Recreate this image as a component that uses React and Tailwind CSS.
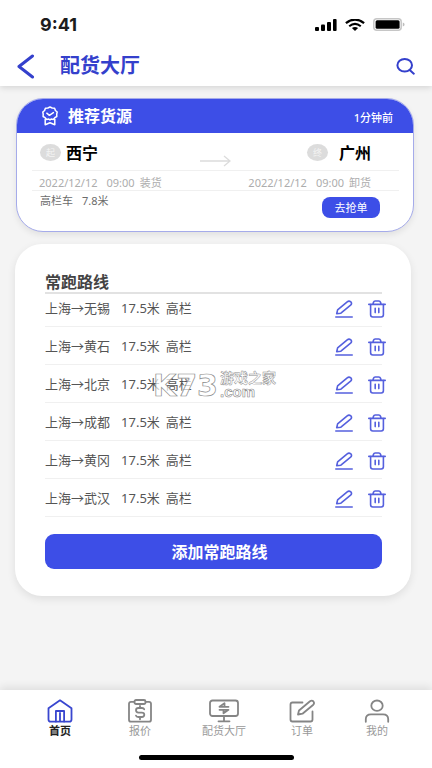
import React from "react";

const routes = ["无锡", "黄石", "北京", "成都", "黄冈", "武汉"];

function StatusBar() {
  return (
    <div className="flex h-[46px] items-center justify-between pt-[3px] pr-[27px] pl-10">
      <span className="font-['Inter',sans-serif] text-[18px] leading-5 font-bold text-[#1c1c1c]">9:41</span>
      <div className="flex items-center gap-2">
        <svg width="22" height="12" viewBox="0 0 22 12" fill="#000" aria-hidden="true">
          <rect x="0" y="8" width="4" height="4" rx="1" />
          <rect x="6" y="5.5" width="4" height="6.5" rx="1" />
          <rect x="12" y="3" width="4" height="9" rx="1" />
          <rect x="18" y="0" width="3.6" height="12" rx="1" />
        </svg>
        <svg width="20" height="12" viewBox="0 0 20 12" fill="none" aria-hidden="true">
          <path d="M.9 4.2Q10-3 19.1 4.2" stroke="#000" strokeWidth="2.3" />
          <path d="M4.2 7.2Q10 2.6 15.8 7.2" stroke="#000" strokeWidth="2.1" />
          <path d="M6.9 9.1Q10 6.7 13.1 9.1L10 12Z" fill="#000" />
        </svg>
        <svg width="32" height="13" viewBox="0 0 32 13" fill="none" aria-hidden="true">
          <rect x=".8" y=".8" width="27.400" height="11.4" rx="3" stroke="#c6c6c6" strokeWidth="1.5" />
          <rect x="2.6" y="2.2" width="24" height="8.6" rx="1.5" fill="#000" />
          <path d="M29.8 4.4v4.200q1.800-.6 1.800-2.100t-1.800-2.100Z" fill="#bdbdbd" />
        </svg>
      </div>
    </div>
  );
}

function MedalIcon() {
  return (
    <svg width="18" height="20" viewBox="0 0 18 20" fill="none" stroke="#fff" strokeWidth="1.5" strokeLinejoin="round" strokeLinecap="round" aria-hidden="true">
      <path d="M9 1l2.2 1 2.4.3.8 2.2L16.2 6l-.5 2.2.1 2.3-2 1.2-1.6 1.7-2.1-.3L9 14l-1.2-.9-2.1.3-1.6-1.7-2-1.2.1-2.3L1.800 6l1.800-1.500.8-2.200L6.800 2Z" />
      <path d="M5.800 7.200L8.400 9.300l4-2.700" />
      <path d="M4.200 13.300v5.500L9 16.800l4.800 2v-5.500" />
    </svg>
  );
}

function PencilIcon() {
  return (
    <svg width="18" height="18" viewBox="0 0 18 18" fill="none" stroke="#5560de" strokeWidth="1.600" strokeLinecap="round" strokeLinejoin="round" aria-hidden="true">
      <path d="M1.700 13.700L2.600 9.900 12.200 1.800Q14 .4 15.800 1.800 17.300 3.600 15.600 5.200L5.900 13.200Z" />
      <path d="M.8 17H17.200" />
    </svg>
  );
}

function TrashIcon() {
  return (
    <svg width="18" height="18" viewBox="0 0 18 18" fill="none" stroke="#5560de" strokeWidth="1.600" strokeLinecap="round" strokeLinejoin="round" aria-hidden="true">
      <path d="M.8 4.400H17.200M4.900 4.200L5.500 2.200Q5.900 1 7.200 1H10.800Q12.100 1 12.500 2.200L13.100 4.200" />
      <path d="M2.600 4.600V14.800Q2.600 17 4.800 17H13.200Q15.400 17 15.400 14.800V4.600M7.200 8.200V12.600M10.800 8.200V12.600" />
    </svg>
  );
}

function Badge({ children }) {
  return (
    <span className="flex h-[17px] w-[21px] items-center justify-center rounded-[50%] bg-[#dcdcdc] text-[9px] leading-none text-[#f4f4f4]">
      {children}
    </span>
  );
}

function Schedule({ action }) {
  return (
    <span className="flex items-center">
      <span className="mr-[9px]">2022/12/12</span>
      <span className="mr-[5px]">09:00</span>
      <span>{action}</span>
    </span>
  );
}

function RecommendedCard() {
  return (
    <section className="mt-3 mr-[18px] ml-4 overflow-hidden rounded-[27px] border border-[#a5abea] bg-white shadow-[0_3px_6px_rgba(0,0,0,0.08)]">
      <div className="flex h-[34px] items-center justify-between bg-[#3d4ee7] pr-5 pl-6 text-white">
        <div className="flex items-center gap-[9px]">
          <MedalIcon />
          <h2 className="text-[16px] leading-5 font-bold">推荐货源</h2>
        </div>
        <span className="pt-1 text-[11px] leading-4 font-medium">1分钟前</span>
      </div>
      <div className="mr-[14px] ml-[15px]">
        <div className="flex h-[38px] items-center justify-between border-b border-[#f0f0f0] pt-0.5 pr-7 pl-2">
          <div className="flex items-center gap-[5px]">
            <Badge>起</Badge>
            <span className="text-[16px] leading-5 font-bold text-black">西宁</span>
          </div>
          <svg className="mt-4 ml-[26px]" width="31" height="12" viewBox="0 0 31 12" fill="none" stroke="#dcdcdc" strokeWidth="1.3" aria-hidden="true">
            <path d="M0 6H30M24 1l6 5-6 5" />
          </svg>
          <div className="flex items-center gap-[11px]">
            <Badge>终</Badge>
            <span className="text-[16px] leading-5 font-bold text-black">广州</span>
          </div>
        </div>
        <div className="flex h-5 items-center justify-between border-b border-[#f0f0f0] pt-1 pr-7 pl-[7px] text-[11px] leading-4 text-[#adadad]">
          <Schedule action="装货" />
          <Schedule action="卸货" />
        </div>
        <div className="flex items-start justify-between pt-[6px] pr-[19px] pb-[13px] pl-2">
          <span className="-mt-1 flex gap-[9px] text-[11px] leading-4 text-[#6c6c6c]">
            <span>高栏车</span>
            <span>7.8米</span>
          </span>
          <button type="button" className="h-[21px] w-[58px] rounded-[8px] bg-[#3d4ee7] text-[11px] leading-4 text-white">去抢单</button>
        </div>
      </div>
    </section>
  );
}

function RoutesCard() {
  return (
    <section className="mt-3 mr-[21px] ml-[15px] rounded-[27px] bg-white pt-7 pr-[29px] pb-[27px] pl-[30px] shadow-[0_3px_8px_rgba(0,0,0,0.09)]">
      <h2 className="border-b-2 border-[#e2e2e2] text-[16px] leading-5 font-bold text-[#444]">常跑路线</h2>
      <ul>
        {routes.map((city) => (
          <li key={city} className="flex items-center justify-between border-b border-[#f0f0f0] pt-[9px] pb-2 first:pt-1">
            <span className="flex text-[13px] leading-5 text-[#555]">
              <span className="mr-[11px]">上海→{city}</span>
              <span className="mr-[6px]">17.5米</span>
              <span>高栏</span>
            </span>
            <span className="-mr-1 flex h-5 items-end gap-[15px]">
              <button type="button" aria-label="编辑"><PencilIcon /></button>
              <button type="button" aria-label="删除"><TrashIcon /></button>
            </span>
          </li>
        ))}
      </ul>
      <button type="button" className="mt-[17px] h-[35px] w-full rounded-[9px] bg-[#3d4ee7] pl-3 text-[16px] leading-5 font-bold text-white">
        添加常跑路线
      </button>
    </section>
  );
}

const navItems = [
  {
    label: "首页",
    active: true,
    icon: (
      <>
        <path d="M1.500 9.300L13 1.300l11.500 8V20.500Q24.500 22.700 22.300 22.700H3.700Q1.500 22.700 1.500 20.500Z" />
        <path d="M8.900 22.500V12H17.100V22.500M13 14V22" />
      </>
    ),
  },
  {
    label: "报价",
    icon: (
      <>
        <path d="M7.500 2.800H4Q2 2.800 2 4.800V20.700Q2 22.700 4 22.700H22Q24 22.700 24 20.700V4.800Q24 2.800 22 2.800H18.500" />
        <rect x="7.500" y="1" width="11" height="4" rx="1.500" />
        <path d="M17.200 10.300Q16.800 9 15 9H11.500Q9 9 9 11.200T11.500 13.600H14.800Q17.300 13.600 17.300 15.800T14.800 18H11.300Q9.300 18 9 16.600M13 7V9M13 18v2.300" />
      </>
    ),
  },
  {
    label: "配货大厅",
    wide: true,
    icon: (
      <>
        <rect x="1" y="1.500" width="28" height="15.500" rx="2.500" />
        <path d="M15 17.500V22M9.500 22.300H20.500M19.500 7.800H10.500L15.500 4.300V7.500M10.500 10.800H19.500L14.500 14.300V11" />
      </>
    ),
  },
  {
    label: "订单",
    icon: (
      <>
        <path d="M13.500 3.500H3.500Q1.500 3.500 1.500 5.500V20.500Q1.500 22.500 3.500 22.500H21.500Q23.500 22.500 23.500 20.500V12.500" />
        <path d="M9 15.500L10 11.500 21 2.300Q22.800 1 24.300 2.300 25.800 4 24.300 5.700L13.500 14.700Z" />
      </>
    ),
  },
  {
    label: "我的",
    icon: (
      <>
        <ellipse cx="13" cy="6.700" rx="5.700" ry="5.200" />
        <path d="M1.800 22.800V20Q1.800 15.300 7 15.300H19Q24.200 15.300 24.200 20V22.800" />
      </>
    ),
  },
];

function BottomNav() {
  return (
    <footer className="mt-auto bg-white pb-2 shadow-[0_-3px_8px_rgba(0,0,0,0.09)]">
      <nav className="grid grid-cols-[80fr_80fr_88fr_68fr_82fr] pt-[9px] pr-[14px] pl-5">
        {navItems.map((item) => (
          <a key={item.label} href="#" className={item.active ? "flex flex-col items-center text-[#3946cf]" : "flex flex-col items-center text-[#858585]"}>
            <svg
              width={item.wide ? 30 : 26}
              height="24"
              viewBox={item.wide ? "0 0 30 24" : "0 0 26 24"}
              fill="none"
              stroke="currentColor"
              strokeWidth="1.8"
              strokeLinecap="round"
              strokeLinejoin="round"
              aria-hidden="true"
            >
              {item.icon}
            </svg>
            <span className={item.active ? "text-[11px] leading-4 font-bold text-[#222]" : "text-[11px] leading-4 text-[#999]"}>{item.label}</span>
          </a>
        ))}
      </nav>
      <div className="mx-auto mt-4 h-[5px] w-[155px] rounded-full bg-black" />
    </footer>
  );
}

function Watermark() {
  return (
    <svg className="pointer-events-none absolute top-[366px] left-[150px]" width="132" height="38" viewBox="0 0 132 38" fill="#ffffffb0" stroke="#8a8a8a" strokeWidth=".7" aria-hidden="true">
      <text x="3" y="30" fontSize="30" fontWeight="700" fontFamily="'DejaVu Sans', sans-serif">K73</text>
      <text x="70" y="17" fontSize="14" fontWeight="700" fontFamily="'Noto Sans CJK SC', sans-serif" fill="#fff" strokeWidth=".45">游戏之家</text>
      <text x="70" y="31" fontSize="15" fontWeight="700" fontFamily="'Liberation Sans', sans-serif" fill="#fff" strokeWidth=".6">.com</text>
    </svg>
  );
}

export default function App() {
  return (
    <div className="relative flex min-h-screen flex-col bg-[#f4f4f4] font-['Noto_Sans','Noto_Sans_CJK_SC',sans-serif]">
      <header className="bg-white shadow-[0_2px_6px_rgba(0,0,0,0.12)]">
        <StatusBar />
        <div className="flex h-10 items-center px-[17px]">
          <button type="button" aria-label="返回">
            <svg width="18" height="25" viewBox="0 0 18 25" fill="none" stroke="#3440cc" strokeWidth="3" strokeLinecap="round" strokeLinejoin="round" aria-hidden="true">
              <path d="M15.500 2L2 12.500l13.500 10.500" />
            </svg>
          </button>
          <h1 className="ml-[25px] text-[20px] leading-7 font-bold text-[#3440cc]">配货大厅</h1>
          <button type="button" aria-label="搜索" className="ml-auto">
            <svg width="19" height="17" viewBox="0 0 19 17" fill="none" stroke="#3440cc" strokeWidth="2" strokeLinecap="round" aria-hidden="true">
              <ellipse cx="8.700" cy="7.300" rx="7.300" ry="6.300" />
              <path d="M13.700 12l4.100 3.700" />
            </svg>
          </button>
        </div>
      </header>
      <main className="pb-8">
        <RecommendedCard />
        <RoutesCard />
      </main>
      <BottomNav />
      <Watermark />
    </div>
  );
}
